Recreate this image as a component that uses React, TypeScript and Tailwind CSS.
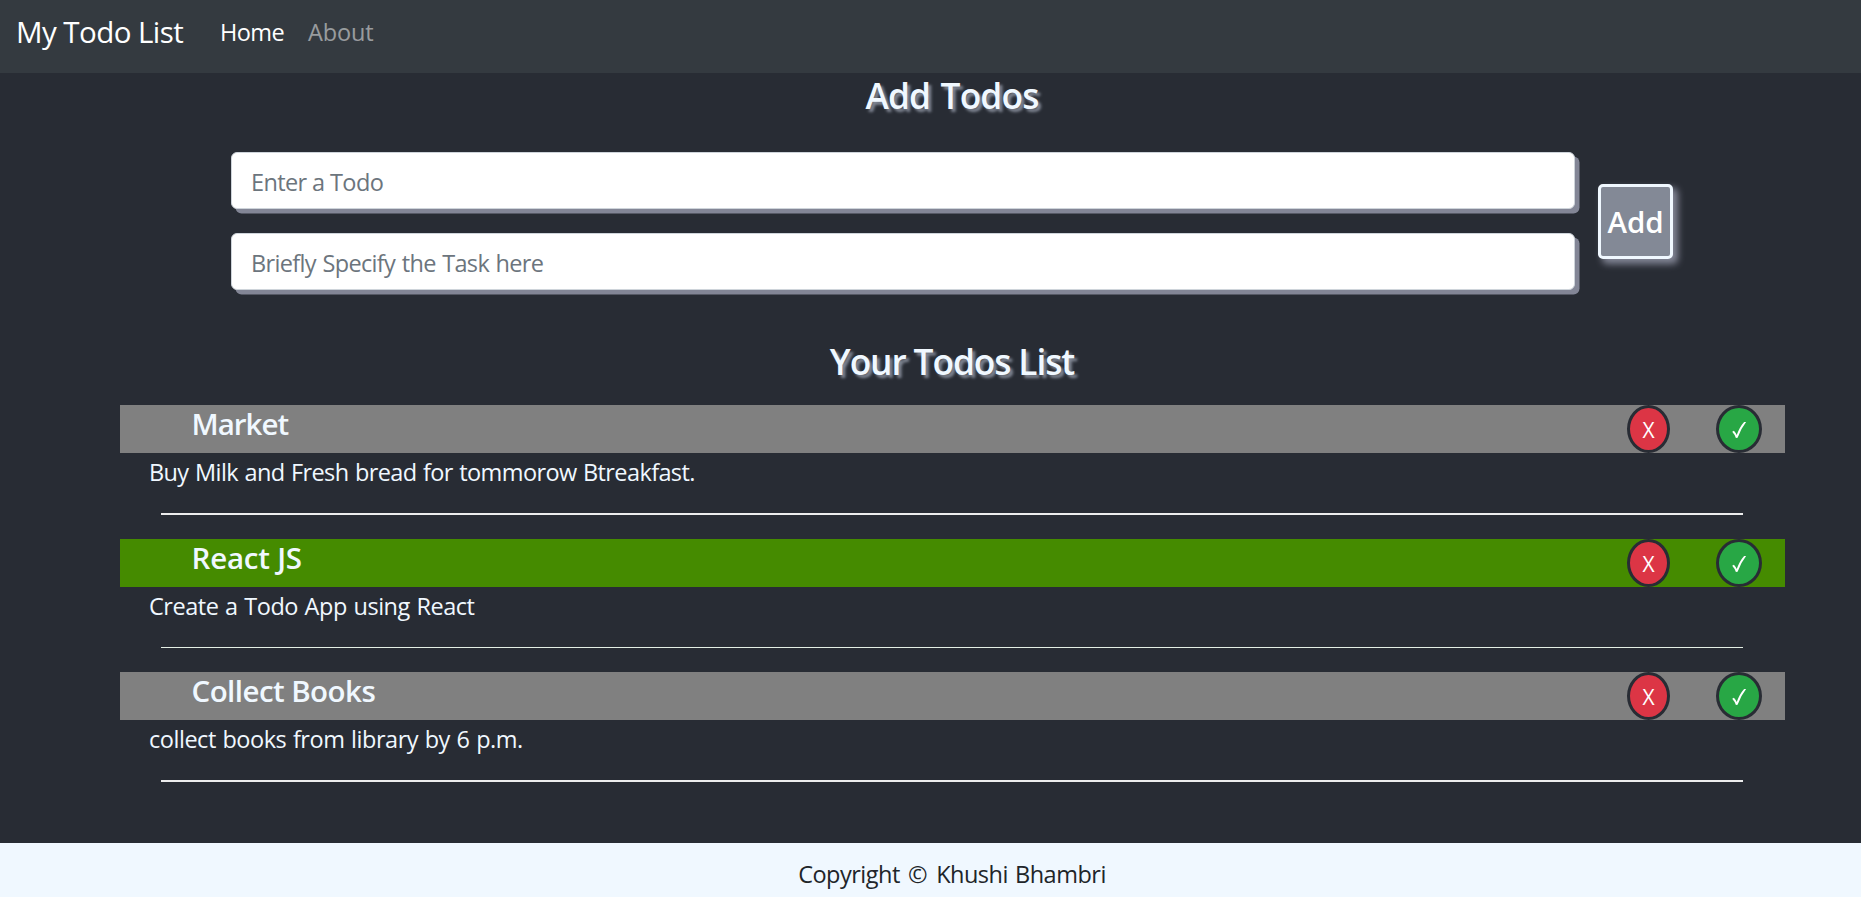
type Todo = {
  title: string;
  titleClass: string;
  desc: string;
  descClass: string;
  barClass: string;
  rowClass: string;
  lineClass: string;
};

const todos: Todo[] = [
  {
    title: "Market",
    titleClass: "tracking-[-1px]",
    desc: "Buy Milk and Fresh bread for tommorow Btreakfast.",
    descClass: "tracking-[-0.61px] [word-spacing:1px]",
    barClass: "bg-[#808080]",
    rowClass: "h-[134px]",
    lineClass: "h-[2px] bg-[#ededed]",
  },
  {
    title: "React JS",
    titleClass: "tracking-[-0.2px]",
    desc: "Create a Todo App using React",
    descClass: "tracking-[-0.47px] [word-spacing:1px]",
    barClass: "bg-[#458b00]",
    rowClass: "h-[133px]",
    lineClass: "h-px bg-[#e4efe4]",
  },
  {
    title: "Collect Books",
    titleClass: "tracking-[-0.55px]",
    desc: "collect books from library by 6 p.m.",
    descClass: "tracking-[-0.47px] [word-spacing:1px]",
    barClass: "bg-[#808080]",
    rowClass: "h-[171px]",
    lineClass: "h-[2px] bg-[#ededed]",
  },
];

function Navbar() {
  return (
    <nav className="flex h-[73px] items-start bg-[#343a40] pl-4 text-white">
      <a className="mt-[9px] w-[204px] text-[29.5px] leading-[45px] tracking-[-0.55px]">My Todo List</a>
      <a className="mt-[14px] w-[88px] text-[23.5px] leading-9 tracking-[-0.6px]">Home</a>
      <a className="mt-[14px] text-[23.5px] leading-9 tracking-[-0.15px] text-white/50">About</a>
    </nav>
  );
}

function AddTodo() {
  const field =
    "block h-[57px] w-full rounded-[6px] border border-[#ced4da] bg-white pt-[3px] pl-[19px] text-[23.5px] text-[#495057] shadow-[4.5px_4.5px_0_#838696] outline-none placeholder:text-[#6c757d] placeholder:opacity-100";
  return (
    <form className="mt-[35px] ml-[231px] flex h-[138px] items-start">
      <div className="flex w-[1344px] flex-col gap-6">
        <input className={`${field} tracking-[-0.61px]`} placeholder="Enter a Todo" />
        <input className={`${field} tracking-[-0.65px] [word-spacing:1px]`} placeholder="Briefly Specify the Task here" />
      </div>
      <button
        type="button"
        className="mt-8 ml-[23px] size-[75px] rounded-[5px] border-[3px] border-[#f0f8ff] bg-[#838996] pt-[2px] text-center text-[29.5px] font-semibold text-white shadow-[4.5px_4.5px_7.5px_#838696]"
      >
        Add
      </button>
    </form>
  );
}

function TodoItem({ todo }: { todo: Todo }) {
  return (
    <section className={`flex flex-col ${todo.rowClass}`}>
      <div className={`flex h-12 shrink-0 items-start pr-[23px] pl-[71.5px] ${todo.barClass}`}>
        <h4 className={`flex-1 text-[29.5px] leading-[38px] font-semibold ${todo.titleClass}`}>{todo.title}</h4>
        <button className="flex h-12 w-[43px] items-center justify-center rounded-[50%] border-[3px] border-[#282c34] bg-[#dc3545] pt-[2px] text-[21px] leading-none font-medium text-white">
          X
        </button>
        <button
          aria-label="done"
          className="ml-[46px] flex h-12 w-[46px] items-center justify-center rounded-[50%] border-[3px] border-[#282c34] bg-[#28a745] pt-[2px]"
        >
          <svg className="h-[18px] w-[16px]" viewBox="0 0 16 18" fill="none">
            <path
              d="M1.2 10.8 L2.9 9.7 Q4.7 11.6 5.7 14 Q8.6 6 13.1 1 L15.1 1 Q9.9 7.6 6.6 16.7 L4.9 17 Q3.6 13.4 1.2 10.8Z"
              fill="white"
            />
          </svg>
        </button>
      </div>
      <p className={`mt-px ml-[29px] shrink-0 text-[23.5px] leading-9 ${todo.descClass}`}>{todo.desc}</p>
      <div className={`mt-[23px] mr-[42px] ml-[41px] shrink-0 ${todo.lineClass}`} />
    </section>
  );
}

export default function App() {
  const heading =
    "text-center text-[35.3px] leading-[43px] font-semibold [text-shadow:3px_3px_3px_#838996]";
  return (
    <div className="flex h-[897px] flex-col overflow-hidden bg-[#282c34] font-['Open_Sans','Noto_Sans',sans-serif] text-[#f0f8ff]">
      <Navbar />
      <main className="flex flex-col pt-px">
        <h2 className={`${heading} pl-[43px] tracking-[-0.85px] [word-spacing:2px]`}>Add Todos</h2>
        <AddTodo />
        <h2 className={`${heading} mt-[50px] pl-[43px] tracking-[-1.1px]`}>Your Todos List</h2>
        <div className="mt-[22px] ml-[120px] w-[1665px]">
          {todos.map((todo) => (
            <TodoItem key={todo.title} todo={todo} />
          ))}
        </div>
      </main>
      <footer className="h-[54px] shrink-0 bg-[#f0f8ff] pt-[13px] pl-[43px] text-center text-[23.5px] leading-9 tracking-[-0.5px] text-[#212529] [word-spacing:1.5px]">
        Copyright{" "}
        <span className="mr-[2px] ml-px">©</span> Khushi Bhambri
      </footer>
    </div>
  );
}
